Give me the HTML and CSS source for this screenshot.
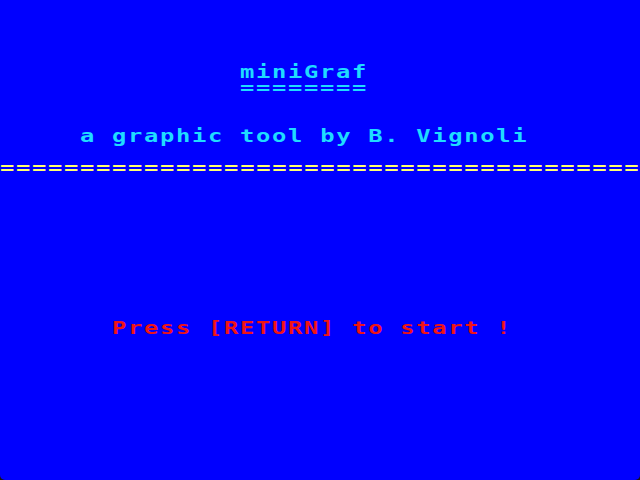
FILE: index.html
```html
<!DOCTYPE html>
<html>
<head>
<meta charset="utf-8">
<link rel="stylesheet" href="styles.css">
</head>
<body>
<div class="screen">
  <div class="row r4 c15 cyan"><span class="t">miniGraf</span></div>
  <div class="row c15 cyan"><span class="t">========</span></div>
  <div class="row r8 c5 cyan"><span class="t">a graphic tool by B. Vignoli</span></div>
  <div class="row r10 c0 yellow"><span class="t">========================================</span></div>
  <div class="row r20 c7 red"><span class="t">Press [RETURN] to start !</span></div>
</div>
</body>
</html>
```
FILE: styles.css
```css
html, body {
  margin: 0;
  padding: 0;
  background: #1a1410;
}
.screen {
  width: 640px;
  height: 480px;
  background: #0000ff;
  display: flex;
  flex-direction: column;
  overflow: hidden;
  border-radius: 0 0 5px 5px;
}
.row {
  height: 16px;
  line-height: 16px;
  font-family: "DejaVu Sans Mono", monospace;
  font-weight: bold;
  font-size: 17px;
  white-space: pre;
  flex: none;
}
.t {
  display: inline-block;
  letter-spacing: 1.2px;
  transform: scaleX(1.4);
  transform-origin: 0 0;
}
.r4 { margin-top: 64px; }
.r8 { margin-top: 32px; }
.r10 { margin-top: 16px; }
.r20 { margin-top: 144px; }
.c0 { padding-left: 0; }
.c5 { padding-left: 80px; }
.c7 { padding-left: 112px; }
.c15 { padding-left: 240px; }
.cyan { color: #1fdcff; }
.yellow { color: #ffff70; }
.red { color: #f01414; }
```
